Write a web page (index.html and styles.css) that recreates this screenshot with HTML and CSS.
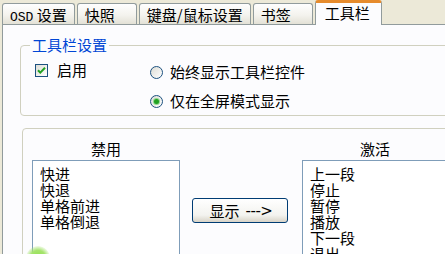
FILE: index.html
```html
<!DOCTYPE html>
<html lang="zh">

<head>
  <meta charset="UTF-8" />
  <title>工具栏</title>
  <link rel="stylesheet" href="styles.css">
</head>

<body>
  <div class="tabs">
    <div class="tab"><span class="latin">OSD</span> 设置</div>
    <div class="tab">快照</div>
    <div class="tab">键盘/鼠标设置</div>
    <div class="tab">书签</div>
    <div class="tab active">工具栏</div>
  </div>

  <div class="panel">
    <fieldset class="group settings">
      <legend>工具栏设置</legend>
      <div class="options">
        <label class="check">
          <svg class="box" width="13" height="13" viewBox="0 0 13 13">
            <defs>
              <linearGradient id="boxFill" x1="0" y1="0" x2="1" y2="1">
                <stop offset="0" stop-color="#dcdcd5" />
                <stop offset="1" stop-color="#ffffff" />
              </linearGradient>
            </defs>
            <rect x="0.5" y="0.5" width="12" height="12" fill="url(#boxFill)" stroke="#1c5180" />
            <path d="M3 6.2 L5.3 8.6 L10 3.8" fill="none" stroke="#21a121" stroke-width="2" />
          </svg>
          启用
        </label>
        <div class="radios">
          <label class="radio"><span class="dot"></span>始终显示工具栏控件</label>
          <label class="radio checked"><span class="dot"></span>仅在全屏模式显示</label>
        </div>
      </div>
    </fieldset>

    <div class="group lists">
      <div class="col">
        <div class="col-title">禁用</div>
        <ul class="listbox">
          <li>快进</li>
          <li>快退</li>
          <li>单格前进</li>
          <li>单格倒退</li>
        </ul>
      </div>
      <button class="move">显示 <span class="arrow">---&gt;</span></button>
      <div class="col">
        <div class="col-title">激活</div>
        <ul class="listbox">
          <li>上一段</li>
          <li>停止</li>
          <li>暂停</li>
          <li>播放</li>
          <li>下一段</li>
          <li>退出</li>
        </ul>
      </div>
    </div>
  </div>

  <!-- stray green blob at the bottom edge -->
  <div class="glow"></div>
</body>

</html>
```

FILE: styles.css
```css
body {
  margin: 0;
  width: 445px;
  height: 254px;
  overflow: hidden;
  position: relative;
  background: #ece9d8;
  font-family: "Noto Sans CJK SC", sans-serif;
  font-size: 15px;
  color: #000;
  padding-left: 2px;
  box-sizing: border-box;
}

.latin {
  font-family: "Liberation Mono", monospace;
  font-size: 13px;
}

/* Tab strip */
.tabs {
  display: flex;
  align-items: flex-end;
  gap: 2px;
  height: 24px;
  border-bottom: 1px solid #919b9c;
  width: 600px;
}

.tab {
  box-sizing: border-box;
  height: 21px;
  min-width: 60px;
  padding: 1px 7px 0 7px;
  line-height: 19px;
  border: 1px solid #919b9c;
  border-bottom: none;
  border-radius: 3px 3px 0 0;
  background: linear-gradient(#fefefe, #f4f3ee 55%, #e3e1d6);
  white-space: nowrap;
}

.tab.active {
  height: 25px;
  min-width: 67px;
  margin-bottom: -1px;
  padding: 0 7px 0 9px;
  line-height: 19px;
  border-top: 3px solid #e68b2c;
  background: #fcfcfe;
}

/* Page body */
.panel {
  width: 600px;
  height: 240px;
  background: #fcfcfe;
  border-left: 1px solid #919b9c;
  padding: 12px 0 0 17px;
  box-sizing: border-box;
}

.group {
  border: 1px solid #d0d0bf;
  border-radius: 4px;
  width: 520px;
  box-sizing: border-box;
}

.settings {
  margin: 0;
  padding: 7px 0 4px 14px;
}

.settings legend {
  color: #0046d5;
  padding: 0 2px;
  margin-left: -5px;
  line-height: 16px;
}

.options {
  display: grid;
  grid-template-columns: 115px auto;
}

.check,
.radio {
  display: flex;
  align-items: center;
  gap: 8px;
  line-height: 20px;
  height: 20px;
}

.check .box {
  margin-right: 1px;
}

.radios {
  display: flex;
  flex-direction: column;
  gap: 9px;
  margin-top: 2px;
}

.radio .dot {
  width: 11px;
  height: 11px;
  border: 1px solid #1c5180;
  border-radius: 50%;
  background: linear-gradient(135deg, #dcdcd5, #ffffff);
  margin-right: -1px;
  display: flex;
  align-items: center;
  justify-content: center;
}

.radio.checked .dot::after {
  content: "";
  width: 5px;
  height: 5px;
  border-radius: 50%;
  background: #21a121;
  box-shadow: 0 0 0 1px #8fd68f;
}

/* Lists */
.lists {
  margin: 12px 0 0 2px;
  padding: 11px 0 0 9px;
  height: 200px;
  display: flex;
  align-items: flex-start;
}

.col {
  display: flex;
  flex-direction: column;
}

.col:first-child {
  width: 148px;
}

.col:last-child {
  width: 146px;
}

.col-title {
  text-align: center;
  line-height: 17px;
  margin-bottom: 3px;
}

.listbox {
  list-style: none;
  margin: 0;
  padding: 5px 0 0 7px;
  height: 100px;
  background: #fff;
  border: 1px solid #7f9db9;
  line-height: 16px;
}

.move {
  margin: 58px 14px 0 12px;
  width: 96px;
  height: 25px;
  padding: 0 0 0 2px;
  border: 1px solid #003c74;
  border-radius: 3px;
  background: linear-gradient(#ffffff, #f3f3ef 70%, #d8d3c7);
  font-family: "Noto Sans CJK SC", sans-serif;
  font-size: 15px;
  color: #000;
  display: flex;
  align-items: center;
  justify-content: center;
  gap: 6px;
}

.move .arrow {
  font-family: "DejaVu Sans", sans-serif;
  font-size: 15px;
  letter-spacing: -0.5px;
}

.glow {
  position: absolute;
  left: 26px;
  top: 246px;
  width: 24px;
  height: 24px;
  border-radius: 50%;
  background: radial-gradient(circle, #8fe04a 0%, #a6e46e 45%, rgba(200, 240, 170, 0) 75%);
}
```
